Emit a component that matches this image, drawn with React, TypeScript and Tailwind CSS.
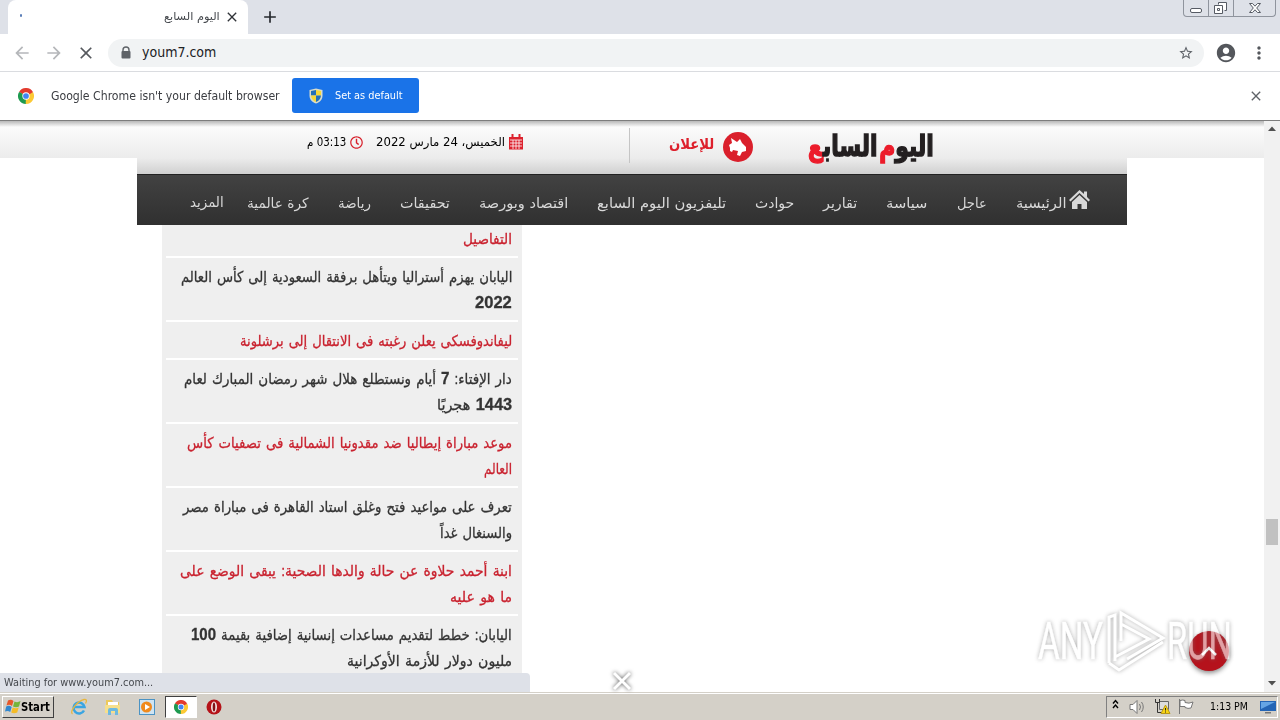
import { useLayoutEffect, useRef } from "react"
import { MdAccountCircle, MdAdd, MdArrowBack, MdArrowForward, MdClose, MdMoreVert, MdStarBorder } from "react-icons/md"
import { FaRegClock } from "react-icons/fa"

type FitProps = { w: number; text: React.ReactNode; rtl?: boolean; className?: string }

// one line of text, squeezed or stretched to a fixed width
function Fit({ w, text, rtl, className = "" }: FitProps) {
  const ref = useRef<HTMLSpanElement>(null)
  useLayoutEffect(() => {
    const el = ref.current
    if (el) el.style.transform = `scaleX(${w / el.offsetWidth})`
  }, [w])
  return (
    <span dir="ltr" className={`block shrink-0 ${className}`} style={{ width: w }}>
      <span ref={ref} dir={rtl ? "rtl" : "ltr"} className="inline-block origin-left whitespace-nowrap">
        {text}
      </span>
    </span>
  )
}

const news = [
  { red: true, lines: [["التفاصيل", 49]] },
  { red: false, lines: [["اليابان يهزم أستراليا ويتأهل برفقة السعودية إلى كأس العالم", 331], ["2022", 37]] },
  { red: true, lines: [["ليفاندوفسكى يعلن رغبته فى الانتقال إلى برشلونة", 272]] },
  { red: false, lines: [["دار الإفتاء: 7 أيام ونستطلع هلال شهر رمضان المبارك لعام", 328], ["1443 هجريًا", 75]] },
  { red: true, lines: [["موعد مباراة إيطاليا ضد مقدونيا الشمالية فى تصفيات كأس", 325], ["العالم", 28]] },
  { red: false, lines: [["تعرف على مواعيد فتح وغلق استاد القاهرة فى مباراة مصر", 329], ["والسنغال غداً", 72]] },
  { red: true, lines: [["ابنة أحمد حلاوة عن حالة والدها الصحية: يبقى الوضع على", 332], ["ما هو عليه", 62]] },
  { red: false, lines: [["اليابان: خطط لتقديم مساعدات إنسانية إضافية بقيمة 100", 321], ["مليون دولار للأزمة الأوكرانية", 165]] },
] as { red: boolean; lines: [string, number][] }[]

// numbers in headlines are bold and a little larger
const withBoldDigits = (text: string) =>
  text.split(/(\d+)/).map((part, i) => (i % 2 ? <b key={i} className="text-[17px] leading-none">{part}</b> : part))

const nav: [string, number][] = [
  ["عاجل", 30],
  ["سياسة", 42],
  ["تقارير", 34],
  ["حوادث", 39],
  ["تليفزيون اليوم السابع", 129],
  ["اقتصاد وبورصة", 89],
  ["تحقيقات", 50],
  ["رياضة", 33],
  ["كرة عالمية", 62],
]

function ChromeIcon({ className }: { className: string }) {
  return (
    <svg viewBox="0 0 24 24" className={className}>
      <path d="M12 12 1.6 6A12 12 0 0 1 22.4 6Z" fill="#e33b2e" />
      <path d="M12 12 22.4 6A12 12 0 0 1 12 24Z" fill="#fcc934" />
      <path d="M12 12v12A12 12 0 0 1 1.6 6Z" fill="#1e9a50" />
      <path d="M12 6.5h10.7L12 12Z" fill="#e33b2e" />
      <path d="m16.8 14.8-5.3 9.2L12 12Z" fill="#fcc934" />
      <path d="M7.2 14.8 1.6 6 12 12Z" fill="#1e9a50" />
      <circle cx="12" cy="12" r="5.5" fill="#fff" />
      <circle cx="12" cy="12" r="4.3" fill="#4285f4" />
    </svg>
  )
}

function Shield() {
  return (
    <svg viewBox="0 0 14 16" className="h-4 w-3.5">
      <path d="M7 .5 13.5 2v5.5C13.5 11.5 11 14 7 15.6 3 14 .5 11.5 .5 7.5V2Z" fill="#d8dccb" />
      <path d="M7 2v5.5H2V3Z" fill="#2470b8" />
      <path d="M7 2l5 1v4.5H7Z" fill="#f6d838" />
      <path d="M7 7.5v6.6C4 12.8 2.3 11 2 7.5Z" fill="#f6d838" />
      <path d="M7 7.5v6.6c3-1.3 4.7-3.1 5-6.6Z" fill="#2470b8" />
    </svg>
  )
}

function Browser() {
  return (
    <>
      <div className="flex h-[34px] bg-[#dee1e8] pl-2">
        <div className="flex h-[34px] w-60 items-center rounded-t-lg bg-white pr-2">
          <i className="ml-3 mb-1 h-[3px] w-0.5 rounded-full bg-[#5b7fb8]" />
          <div className="ml-[142px] text-[11px] text-[#45484d]">
            <Fit w={56} text="اليوم السابع" rtl />
          </div>
          <MdClose className="ml-1 size-4 shrink-0 text-[#303338]" />
        </div>
        <MdAdd className="ml-3 mt-[7px] size-5 text-[#25282d]" />
        <div className="ml-auto mr-1 flex h-[17px] w-[93px] rounded-b border border-t-0 border-[#8f949d] text-[#565b64]">
          <svg width="91" height="16" fill="none" stroke="currentColor">
            <path d="M24.5 0v16M49.5 0v16" stroke="#8f949d" />
            <rect x="6.5" y="8.5" width="11" height="4" rx="1.5" fill="#fff" />
            <path d="M34.5 4.5v-2h8v8h-2M30.5 5.5h8v8h-8Zm3 3h2v2h-2Z" fill="#fff" />
            <path d="M65.5 3.5h3l2.5 2.7 2.5-2.7h3l-3.8 4.5 3.8 4.5h-3l-2.5-2.7-2.5 2.7h-3l3.8-4.5Z" fill="#fff" />
          </svg>
        </div>
      </div>

      <div className="flex h-[38px] items-center border-b border-[#dadce0] bg-white pl-3">
        <MdArrowBack className="size-5 text-[#b5b7ba]" />
        <MdArrowForward className="ml-3 size-5 text-[#b5b7ba]" />
        <MdClose className="ml-3 size-5 text-[#55585d]" />
        <div className="ml-3 flex h-7 w-[1096px] items-center rounded-full bg-[#f1f3f4] pl-[13px] pr-2.5">
          <svg width="10" height="13" fill="#5f6368">
            <path d="M2 6V4a3 3 0 0 1 6 0v2" fill="none" stroke="#5f6368" strokeWidth="1.4" />
            <rect x=".5" y="5" width="9" height="7.5" rx="1" />
          </svg>
          <Fit w={74} text="youm7.com" className="ml-[11px] text-[14px] text-[#202124]" />
          <MdStarBorder className="ml-auto size-4 text-[#5f6368]" />
        </div>
        <MdAccountCircle className="ml-[11px] size-[22px] text-[#54575c]" />
        <MdMoreVert className="ml-3 size-5 text-[#54575c]" />
      </div>

      <div className="flex h-[49px] items-center border-b border-[#7d7d7d] bg-white pb-px pl-[18px]">
        <ChromeIcon className="size-4" />
        <Fit w={229} text="Google Chrome isn't your default browser" className="ml-[17px] text-[12px] text-[#3b3d42]" />
        <div className="ml-3 flex h-[35px] w-[127px] items-center rounded-[3px] bg-[#1a73e8] pl-[17px]">
          <Shield />
          <Fit w={68} text="Set as default" className="ml-3 pt-px text-[11px] text-white" />
        </div>
        <MdClose className="ml-auto mr-4 size-4 text-[#5f6368]" />
      </div>
    </>
  )
}

function Header() {
  return (
    <div className="flex h-[53px]">
      <div className="h-[37px] w-[137px] bg-[linear-gradient(#b8b8b8,#fbfbfb_6px,#ececec_37px)]" />
      <div className="flex h-[53px] w-[990px] bg-[linear-gradient(#b8b8b8,#fbfbfb_6px,#ececec_37px,#d0d0d0_53px)] pl-[170px]">
        <div className="flex h-[42px] items-center text-[12px] text-black">
          <Fit w={39} text="03:13 م" rtl />
          <FaRegClock className="ml-1 size-[13px] text-[#d7202b]" />
          <Fit w={129} text="الخميس، 24 مارس 2022" rtl className="ml-[13px]" />
          <svg width="14" height="16" className="ml-1">
            <path d="M0 3h14v12.5H0Z" fill="#dc222d" />
            <path d="M3.5 0v4M10.5 0v4" stroke="#dc222d" strokeWidth="2" />
            <path d="M1 6h12M1 9h12M1 12h12M4 6v9M7 6v9M10 6v9" stroke="#fff" strokeWidth=".8" />
          </svg>
        </div>
        <i className="ml-[106px] mt-[7px] h-[35px] w-px bg-[#c5c5c5]" />
        <div className="ml-[39px] flex h-[51px] items-center">
          <Fit w={45} text="للإعلان" rtl className="pb-1 text-[15px] font-bold text-[#dd202c]" />
          <svg width="30" height="30" viewBox="0 0 30 30" className="ml-[9px]">
            <circle cx="15" cy="15" r="15" fill="#da1f2b" />
            <path d="m8 6 6 4 3-3 2 4 4 4v4l-4 1-2 4-3-1 1-4-5-1-1 2-2-1v-3l-1-3 3-2Z" fill="#fff" />
          </svg>
        </div>
        <Fit
          w={126}
          rtl
          text={
            <>
              اليو<span className="text-[#ec1c2b]">م</span> الساب<span className="text-[#ec1c2b]">ع</span>
            </>
          }
          className="ml-[55px] mt-1 text-[29px] leading-[42px] font-bold text-[#231f20] [word-spacing:-7px] [-webkit-text-stroke:1.4px_currentColor]"
        />
      </div>
      <div className="h-[37px] w-[137px] bg-[linear-gradient(#b8b8b8,#fbfbfb_6px,#ececec_37px)]" />
    </div>
  )
}

function Site() {
  return (
    <div className="flex h-[571px] bg-white">
      <div className="h-[571px] w-[1264px] overflow-hidden">
        <Header />
        <div
          dir="rtl"
          className="mx-auto flex h-[51px] w-[990px] items-center gap-[29px] border-t border-[#222] bg-linear-to-b from-[#424242] to-[#303030] pr-[37px] pt-1.5 text-[14px] text-[#d8d8d8]"
        >
          <div className="flex items-center gap-[3px]">
            <svg width="21" height="20" viewBox="0 0 21 20" className="mb-1.5" fill="#d8d8d8">
              <path d="M10.5 0 15 4V1.500h3V7l3 3-1.500 1.500-9-8.500-9 8.500L0 10Z" />
              <path d="m10.500 5 7.500 7v7h-5.500v-5h-4v5H3v-7Z" />
            </svg>
            <Fit w={50} text="الرئيسية" rtl />
          </div>
          {nav.map(([label, w]) => (
            <Fit key={label} w={w} text={label} rtl />
          ))}
          <Fit w={34} text="المزيد" rtl className="-mr-1.5 pb-0.5" />
        </div>
        <div dir="rtl" className="ml-[162px] h-[467px] w-[360px] overflow-hidden bg-[#efefef] px-1">
          <div className="-mt-[5px]">
            {news.map((item) => (
              <div
                key={item.lines[0][0]}
                className={`border-b-2 border-white pt-1.5 pb-1 pr-1.5 text-[15px] leading-[26px] [word-spacing:1.5px] ${item.red ? "text-[#c9222f]" : "text-[#333]"}`}
              >
                {item.lines.map(([text, w]) => (
                  <Fit
                    key={text}
                    w={w}
                    text={withBoldDigits(text)}
                    rtl
                    className="h-[26px] font-[Liberation_Sans,DejaVu_Sans,sans-serif] [-webkit-text-stroke:0.3px_currentColor]"
                  />
                ))}
              </div>
            ))}
          </div>
        </div>
      </div>
      <div className="flex w-4 flex-col items-center bg-[#f1f1f1]">
        <svg width="16" height="16"><path d="M4 10h8L8 5.5Z" fill="#505050" /></svg>
        <i className="mt-[382px] h-[26px] w-3 bg-[#c1c1c1]" />
        <svg width="16" height="16" className="mt-auto"><path d="M4 5h8L8 9.5Z" fill="#505050" /></svg>
      </div>
    </div>
  )
}

function Taskbar() {
  return (
    <div className="flex h-7 items-center border-t border-[#d4d0c8] bg-[#d4d0c8] shadow-[inset_0_1px_0_#fff]">
      <div className="ml-0.5 flex h-[22px] w-[52px] items-center border border-t-white border-r-[#404040] border-b-[#404040] border-l-white pl-0.5 text-[12px] font-bold text-black">
        <svg width="16" height="17" viewBox="0 0 16 17">
          <path d="M3 2.5Q6 1 8.5 3L7 8Q4.5 6 1.5 7.5Z" fill="#e8582a" />
          <path d="M9.5 3.5Q12.5 5 15.5 3L14 8.5Q11 10 8 8.5Z" fill="#76b43a" />
          <path d="M1.2 8.5Q4 7 6.7 9L5.2 14Q3 12.3 0 13.5Z" fill="#3288cf" />
          <path d="M7.7 9.5Q11 11 13.7 9.5L12.2 14.5Q9 16 6.2 14.5Z" fill="#f5bc27" />
        </svg>
        <Fit w={29} text="Start" />
      </div>
      <svg width="18" height="18" viewBox="0 0 18 18" className="ml-4" fill="none">
        <path d="M14 12.5A5.5 5.5 0 1 1 14.5 9H5" stroke="#3aa5e2" strokeWidth="2.5" />
        <path d="M2.5 16C-1 14 7 3 14 1.500q4-.5 1.500 4" stroke="#e8b63d" strokeWidth="1.3" />
      </svg>
      <svg width="18" height="18" viewBox="0 0 18 18" className="ml-4">
        <path d="M2 2h6l1 2h6v11H2Z" fill="#ecc95b" />
        <path d="M4 4h10v3H4Z" fill="#fff" />
        <path d="M1 7h15v8H1Z" fill="#f6df8b" />
        <path d="M4 17v-5q0-2 2-2h6q2 0 2 2v5h-3v-4H7v4Z" fill="#6db9df" />
      </svg>
      <svg width="16" height="18" viewBox="0 0 16 18" className="ml-[17px]">
        <rect x=".5" y="1.5" width="15" height="15" fill="#cfe4f2" stroke="#4b93c4" />
        <circle cx="7.5" cy="9" r="5.5" fill="#f08a1c" />
        <path d="M6 6v6l5-3Z" fill="#fff" />
      </svg>
      <div className="ml-2.5 flex h-[22px] w-8 items-center justify-center border border-t-[#404040] border-r-white border-b-white border-l-[#404040] bg-white">
        <ChromeIcon className="size-[14px]" />
      </div>
      <svg width="16" height="16" viewBox="0 0 16 16" className="ml-[9px]">
        <circle cx="8" cy="8" r="7.5" fill="#b51218" />
        <ellipse cx="8" cy="8" rx="3" ry="5.5" fill="#f4e5e5" />
        <ellipse cx="8" cy="8" rx="1.3" ry="4.5" fill="#821015" />
      </svg>
      <div className="ml-auto mr-0.5 flex h-[22px] w-[172px] items-center border border-t-[#808080] border-r-white border-b-white border-l-[#808080]">
        <svg width="7" height="11" className="mb-1 ml-[5px]" fill="none" stroke="#000" strokeWidth="1.4">
          <path d="m1 4.500 2.500-3 2.500 3M1 9l2.500-3L6 9" />
        </svg>
        <svg width="17" height="16" className="ml-2.5" fill="#fff" stroke="#777">
          <path d="M1 5.500h3l4-4v13l-4-4H1Z" />
          <path d="M10.500 5q2 3 0 6M12.500 3q3.500 5 0 10" fill="none" />
        </svg>
        <svg width="17" height="17" className="ml-2" fill="none">
          <path d="M5.500 3.500h9v8h-9Z" fill="#ddd" stroke="#666" />
          <path d="M1.500 1v3.500h4V1M3.500 4.500v10H7" stroke="#333" />
          <path d="m11.500 7 4.500 8.500H7Z" fill="#f8d414" stroke="#b99814" />
          <path d="M11.500 10v2.500m0 1v1" stroke="#222" />
        </svg>
        <svg width="17" height="17" className="ml-[7px]" fill="#fff" stroke="#777">
          <path d="M1.500 1v15" />
          <path d="M2 2.500q3-1 5 0v2q4 1.500 8-.5l-2 6q-3 1-6-.5v-1H2Z" />
        </svg>
        <Fit w={38} text="1:13 PM" className="ml-[15px] pt-0.5 text-[11px] text-black" />
        <svg width="16" height="14" className="ml-3">
          <path d="M0 1h16v10H0Z" fill="#2465b5" />
          <path d="M1 2h14L1 9Z" fill="#65a5e5" />
          <path d="M5 12h6v1.500H5Z" fill="#777" />
        </svg>
      </div>
    </div>
  )
}

export default function App() {
  return (
    <main className="relative h-[720px] w-[1280px] overflow-hidden bg-white font-[DejaVu_Sans_Condensed,DejaVu_Sans,sans-serif]">
      <Browser />
      <Site />
      <Taskbar />

      <div className="absolute top-[673px] left-0 flex h-[19px] w-[530px] items-center rounded-tr bg-[#dee1e8] pt-0.5 pl-1 text-[11px] text-[#45484d]">
        <Fit w={149} text="Waiting for www.youm7.com..." />
      </div>
      <svg className="absolute top-[668px] left-[609px] drop-shadow-[0_0_2px_#555]" width="26" height="26">
        <path d="m5 5 16 16M21 5 5 21" stroke="#fff" strokeWidth="3" />
      </svg>
      <div className="absolute top-[631px] left-[1189px] flex size-10 items-center justify-center rounded-full bg-[#b5121c] shadow-[0_2px_5px_#888]">
        <svg width="18" height="12" fill="none" stroke="#fff" strokeWidth="2.5">
          <path d="m2 10 7-7 7 7" />
        </svg>
      </div>
      <svg
        className="absolute top-[602px] left-[1030px] font-[Roboto,sans-serif] drop-shadow-[0_0_2px_#777]"
        width="220"
        height="80"
        opacity=".6"
      >
        <g fill="#fff" stroke="#fff" strokeWidth=".5" fontSize="52">
          <text transform="translate(8 57) scale(.64 1)">ANY</text>
          <text transform="translate(137 57) scale(.63 1)">RUN</text>
        </g>
        <path
          d="M79 61V15l6-2v46M91 39V11l42 25-36 21M91 39V22l28 15-34 18M79 61l10 7 44-28"
          fill="none"
          stroke="#fff"
          strokeWidth="3"
        />
      </svg>
    </main>
  )
}
